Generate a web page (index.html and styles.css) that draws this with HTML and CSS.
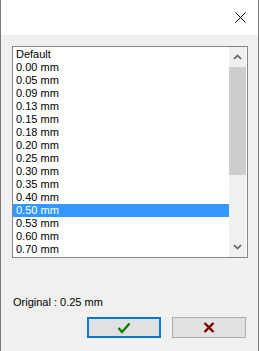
FILE: index.html
```html
<!DOCTYPE html>
<html lang="en">
<head>
    <meta charset="UTF-8">
    <title>Epaisseur</title>
    <link rel="stylesheet" href="styles.css">
</head>
<body>
    <div class="window">
        <div class="titlebar">
            <svg class="close" width="11" height="11" viewBox="0 0 11 11">
                <path d="M0.5 0.5 L10.5 10.5 M10.5 0.5 L0.5 10.5" stroke="#000" stroke-width="1" fill="none"/>
            </svg>
        </div>
        <div class="content">
            <div class="listbox">
                <ul class="items">
                    <li>Default</li>
                    <li>0.00 mm</li>
                    <li>0.05 mm</li>
                    <li>0.09 mm</li>
                    <li>0.13 mm</li>
                    <li>0.15 mm</li>
                    <li>0.18 mm</li>
                    <li>0.20 mm</li>
                    <li>0.25 mm</li>
                    <li>0.30 mm</li>
                    <li>0.35 mm</li>
                    <li>0.40 mm</li>
                    <li class="selected">0.50 mm</li>
                    <li>0.53 mm</li>
                    <li>0.60 mm</li>
                    <li>0.70 mm</li>
                </ul>
                <div class="scrollbar">
                    <div class="arrow">
                        <svg width="9" height="6" viewBox="0 0 9 6"><path d="M1 5 L4.5 1.5 L8 5" stroke="#606060" stroke-width="1.6" fill="none"/></svg>
                    </div>
                    <div class="thumb"></div>
                    <div class="track"></div>
                    <div class="arrow">
                        <svg width="9" height="6" viewBox="0 0 9 6"><path d="M1 1 L4.5 4.5 L8 1" stroke="#606060" stroke-width="1.6" fill="none"/></svg>
                    </div>
                </div>
            </div>
            <div class="original">Original : 0.25 mm</div>
            <div class="buttons">
                <button class="btn btn-ok">
                    <svg width="14" height="12" viewBox="0 0 14 12"><path d="M1.5 6 L5 10 L12.5 1.5" stroke="#008000" stroke-width="2.4" fill="none"/></svg>
                </button>
                <button class="btn btn-cancel">
                    <svg width="12" height="11" viewBox="0 0 12 11"><path d="M1.5 1 L10.5 10 M10.5 1 L1.5 10" stroke="#800000" stroke-width="2.4" fill="none"/></svg>
                </button>
            </div>
        </div>
    </div>
</body>
</html>
```

FILE: styles.css
```css
body {
    margin: 0;
    font-family: "Liberation Sans", Arial, sans-serif;
    font-size: 11px;
    color: #000;
}
.window {
    width: 259px;
    height: 351px;
    box-sizing: border-box;
    border-left: 1px solid #7a7a7a;
    border-right: 1px solid #7a7a7a;
    display: flex;
    flex-direction: column;
    background: #f0f0f0;
}
.titlebar {
    height: 35px;
    background: #fff;
    display: flex;
    justify-content: flex-end;
    align-items: flex-start;
}
.close {
    margin: 12px 12px 0 0;
}
.content {
    flex: 1;
    padding: 11px 10px 0 11px;
}
.listbox {
    height: 212px;
    box-sizing: border-box;
    border: 1px solid #828790;
    background: #fff;
    display: flex;
}
.items {
    flex: 1;
    list-style: none;
    margin: 0;
    padding: 1px 0 0 0;
}
.items li {
    height: 13px;
    line-height: 13px;
    padding-left: 3px;
    white-space: nowrap;
}
.items li.selected {
    background: #3399ff;
    color: #fff;
}
.scrollbar {
    width: 17px;
    background: #f0f0f0;
    display: flex;
    flex-direction: column;
    margin-right: 1px;
}
.arrow {
    height: 20px;
    display: flex;
    align-items: center;
    justify-content: center;
}
.thumb {
    height: 108px;
    background: #cdcdcd;
}
.track {
    flex: 1;
}
.original {
    margin-top: 38px;
    line-height: 13px;
    padding-left: 1px;
}
.buttons {
    display: flex;
    justify-content: flex-end;
    gap: 11px;
    margin-top: 8px;
    padding-right: 2px;
}
.btn {
    width: 74px;
    height: 21px;
    box-sizing: border-box;
    background: #e1e1e1;
    border: 1px solid #adadad;
    padding: 0;
    display: flex;
    align-items: center;
    justify-content: center;
}
.btn-ok {
    border: 2px solid #0078d7;
}
```
